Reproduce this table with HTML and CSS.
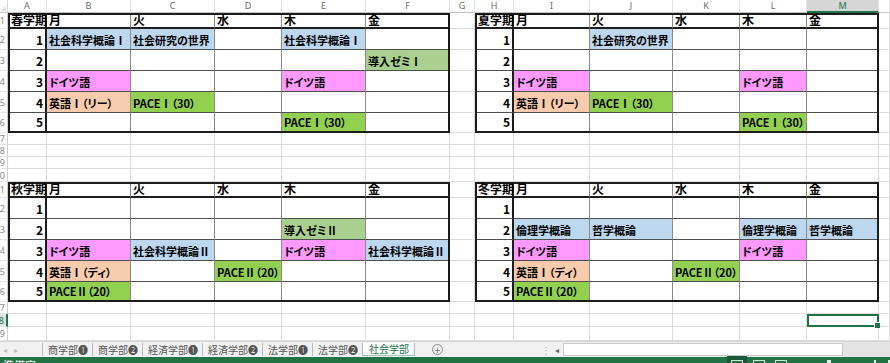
FILE: index.html
```html
<!DOCTYPE html>
<html lang="ja">
<head>
<meta charset="utf-8">
<title>時間割</title>
<link rel="stylesheet" href="styles.css">
</head>
<body>
<div class="app">
  <div class="sheet">
    <div class="corner"></div>
    <div class="ch">A</div><div class="ch">B</div><div class="ch">C</div><div class="ch">D</div><div class="ch">E</div><div class="ch">F</div><div class="ch">G</div><div class="ch">H</div><div class="ch">I</div><div class="ch">J</div><div class="ch">K</div><div class="ch">L</div><div class="ch on">M</div><div class="ch"></div>

    <div class="tbl tl t1">
      <div>春学期</div><div>月</div><div>火</div><div>水</div><div>木</div><div>金</div>
      <div>1</div><div class="b">社会科学概論Ⅰ</div><div class="b">社会研究の世界</div><div></div><div class="b">社会科学概論Ⅰ</div><div></div>
      <div>2</div><div></div><div></div><div></div><div></div><div class="lg">導入ゼミⅠ</div>
      <div>3</div><div class="p">ドイツ語</div><div></div><div></div><div class="p">ドイツ語</div><div></div>
      <div>4</div><div class="o">英語Ⅰ（リー）</div><div class="g">PACEⅠ（30）</div><div></div><div></div><div></div>
      <div>5</div><div></div><div></div><div></div><div class="g">PACEⅠ（30）</div><div></div>
    </div>

    <div class="tbl tr t2">
      <div>夏学期</div><div>月</div><div>火</div><div>水</div><div>木</div><div>金</div>
      <div>1</div><div></div><div class="b">社会研究の世界</div><div></div><div></div><div></div>
      <div>2</div><div></div><div></div><div></div><div></div><div></div>
      <div>3</div><div class="p">ドイツ語</div><div></div><div></div><div class="p">ドイツ語</div><div></div>
      <div>4</div><div class="o">英語Ⅰ（リー）</div><div class="g">PACEⅠ（30）</div><div></div><div></div><div></div>
      <div>5</div><div></div><div></div><div></div><div class="g">PACEⅠ（30）</div><div></div>
    </div>

    <div class="tbl tl t3">
      <div>秋学期</div><div>月</div><div>火</div><div>水</div><div>木</div><div>金</div>
      <div>1</div><div></div><div></div><div></div><div></div><div></div>
      <div>2</div><div></div><div></div><div></div><div class="lg">導入ゼミⅡ</div><div></div>
      <div>3</div><div class="p">ドイツ語</div><div class="b">社会科学概論Ⅱ</div><div></div><div class="p">ドイツ語</div><div class="b">社会科学概論Ⅱ</div>
      <div>4</div><div class="o">英語Ⅰ（ディ）</div><div></div><div class="g">PACEⅡ（20）</div><div></div><div></div>
      <div>5</div><div class="g">PACEⅡ（20）</div><div></div><div></div><div></div><div></div>
    </div>

    <div class="tbl tr t4">
      <div>冬学期</div><div>月</div><div>火</div><div>水</div><div>木</div><div>金</div>
      <div>1</div><div></div><div></div><div></div><div></div><div></div>
      <div>2</div><div class="b">倫理学概論</div><div class="b">哲学概論</div><div></div><div class="b">倫理学概論</div><div class="b">哲学概論</div>
      <div>3</div><div class="p">ドイツ語</div><div></div><div></div><div class="p">ドイツ語</div><div></div>
      <div>4</div><div class="o">英語Ⅰ（ディ）</div><div></div><div class="g">PACEⅡ（20）</div><div></div><div></div>
      <div>5</div><div class="g">PACEⅡ（20）</div><div></div><div></div><div></div><div></div>
    </div>

    <!-- rows 1-6: row header, column G, trailing column -->
    <div class="rh">1</div><div class="e"></div><div class="e"></div>
    <div class="rh">2</div><div class="e"></div><div class="e"></div>
    <div class="rh">3</div><div class="e"></div><div class="e"></div>
    <div class="rh">4</div><div class="e"></div><div class="e"></div>
    <div class="rh">5</div><div class="e"></div><div class="e"></div>
    <div class="rh">6</div><div class="e"></div><div class="e"></div>
    <!-- rows 7-10 -->
    <div class="rh">7</div><div class="e"></div><div class="e"></div><div class="e"></div><div class="e"></div><div class="e"></div><div class="e"></div><div class="e"></div><div class="e"></div><div class="e"></div><div class="e"></div><div class="e"></div><div class="e"></div><div class="e"></div><div class="e"></div>
    <div class="rh">8</div><div class="e"></div><div class="e"></div><div class="e"></div><div class="e"></div><div class="e"></div><div class="e"></div><div class="e"></div><div class="e"></div><div class="e"></div><div class="e"></div><div class="e"></div><div class="e"></div><div class="e"></div><div class="e"></div>
    <div class="rh">9</div><div class="e"></div><div class="e"></div><div class="e"></div><div class="e"></div><div class="e"></div><div class="e"></div><div class="e"></div><div class="e"></div><div class="e"></div><div class="e"></div><div class="e"></div><div class="e"></div><div class="e"></div><div class="e"></div>
    <div class="rh">10</div><div class="e"></div><div class="e"></div><div class="e"></div><div class="e"></div><div class="e"></div><div class="e"></div><div class="e"></div><div class="e"></div><div class="e"></div><div class="e"></div><div class="e"></div><div class="e"></div><div class="e"></div><div class="e"></div>
    <!-- rows 11-16 -->
    <div class="rh">11</div><div class="e"></div><div class="e"></div>
    <div class="rh">12</div><div class="e"></div><div class="e"></div>
    <div class="rh">13</div><div class="e"></div><div class="e"></div>
    <div class="rh">14</div><div class="e"></div><div class="e"></div>
    <div class="rh">15</div><div class="e"></div><div class="e"></div>
    <div class="rh">16</div><div class="e"></div><div class="e"></div>
    <!-- rows 17-19 -->
    <div class="rh">17</div><div class="e"></div><div class="e"></div><div class="e"></div><div class="e"></div><div class="e"></div><div class="e"></div><div class="e"></div><div class="e"></div><div class="e"></div><div class="e"></div><div class="e"></div><div class="e"></div><div class="e"></div><div class="e"></div>
    <div class="rh on">18</div><div class="e"></div><div class="e"></div><div class="e"></div><div class="e"></div><div class="e"></div><div class="e"></div><div class="e"></div><div class="e"></div><div class="e"></div><div class="e"></div><div class="e"></div><div class="e"></div><div class="e sel"></div><div class="e"></div>
    <div class="rh">19</div><div class="e"></div><div class="e"></div><div class="e"></div><div class="e"></div><div class="e"></div><div class="e"></div><div class="e"></div><div class="e"></div><div class="e"></div><div class="e"></div><div class="e"></div><div class="e"></div><div class="e"></div><div class="e"></div>
  </div>

  <div class="tabbar">
    <div class="nav"><span>◂</span><span>▸</span></div>
    <div class="tabs">
      <div class="tab">商学部❶</div>
      <div class="tab">商学部❷</div>
      <div class="tab">経済学部❶</div>
      <div class="tab">経済学部❷</div>
      <div class="tab">法学部❶</div>
      <div class="tab">法学部❷</div>
      <div class="tab act">社会学部</div>
    </div>
    <div class="add">+</div>
    <div class="spacer"></div>
    <div class="dots">⋮</div>
    <div class="left">◂</div>
    <div class="track"></div>
    <div class="tail"></div>
  </div>

  <div class="status">
    <span class="ready">準備完了</span>
    <div class="views">
      <span class="vb active"></span><span class="vb"></span><span class="vb"></span>
    </div>
    <div class="zoomctl">
      <span class="minus"></span><span class="thumb"></span><span class="plus"></span><span class="plus2"></span>
    </div>
  </div>
</div>
</body>
</html>
```

FILE: styles.css
```css
* {
  box-sizing: border-box;
  margin: 0;
  padding: 0;
}

html, body {
  width: 890px;
  height: 363px;
  overflow: hidden;
  background: #fff;
}

body {
  font-family: "Noto Sans CJK JP", "Noto Sans", sans-serif;
  color: #000;
}

.app {
  display: flex;
  flex-direction: column;
  width: 890px;
}

/* ---------- sheet grid ---------- */
.sheet {
  display: grid;
  grid-template-columns: 8px 39px 84px 84px 67px 84px 84px 25px 39px 76px 83px 67px 67px 72px 11px;
  grid-template-rows: 13px 16px 21px 21px 21px 21px 20px 12px 12px 12px 13px 16px 21px 21px 21px 21px 20px 12px 13px 14px;
}

.corner {
  position: relative;
  border-right: 1px solid #d4d4d4;
  border-bottom: 1px solid #c4c4c4;
  background: #fff;
}

.corner::after {
  content: "";
  position: absolute;
  right: 1px;
  bottom: 1px;
  border-left: 5px solid transparent;
  border-bottom: 5px solid #dcdcdc;
}

.ch {
  font-family: "Noto Sans", "DejaVu Sans", sans-serif;
  font-size: 9px;
  line-height: 12px;
  color: #6a6a6a;
  text-align: center;
  border-right: 1px solid #e2e2e2;
  border-bottom: 1px solid #c4c4c4;
  background: #fff;
}

.ch.on {
  background: #d6d6d6;
  color: #217346;
  border-bottom: 2px solid #217346;
}

.rh {
  display: flex;
  justify-content: flex-end;
  align-items: center;
  overflow: hidden;
  padding-right: 2px;
  font-family: "Noto Sans", "DejaVu Sans", sans-serif;
  font-size: 9px;
  color: #8a8a8a;
  white-space: nowrap;
  border-right: 1px solid #cfcfcf;
  border-bottom: 1px solid #e4e4e4;
}

.rh.on {
  color: #217346;
  background: #e4e4e4;
  border-right: 2px solid #217346;
}

.e {
  border-right: 1px solid #dcdcdc;
  border-bottom: 1px solid #dcdcdc;
}

.e.sel {
  position: relative;
  border: 2px solid #217346;
}

.e.sel::after {
  content: "";
  position: absolute;
  right: -4px;
  bottom: -4px;
  width: 5px;
  height: 5px;
  background: #217346;
  border: 1px solid #fff;
}

/* ---------- timetable blocks ---------- */
.tbl {
  display: grid;
  grid-template-rows: 14px 21px 21px 21px 21px 18px;
  border: 2px solid #1c1c1c;
  font-size: 11px;
  font-weight: 700;
  font-feature-settings: "palt";
  background: #fff;
}

.tl {
  grid-template-columns: 37px 84px 84px 67px 84px 82px;
}

.tr {
  grid-template-columns: 37px 76px 83px 67px 67px 70px;
}

.t1 { grid-column: 2 / 8; grid-row: 2 / 8; }
.t2 { grid-column: 9 / 15; grid-row: 2 / 8; }
.t3 { grid-column: 2 / 8; grid-row: 12 / 18; }
.t4 { grid-column: 9 / 15; grid-row: 12 / 18; }

.tbl > div {
  display: flex;
  align-items: flex-end;
  padding: 0 2px 2px 2px;
  line-height: 14px;
  white-space: nowrap;
  border-right: 1px solid #8c8c8c;
  border-bottom: 1px solid #4f4f4f;
}

.tbl > div:nth-child(6n+1) {
  justify-content: flex-end;
  font-size: 12px;
  border-right: 2px solid #1c1c1c;
}

.tbl > div:first-child {
  justify-content: flex-start;
  padding-left: 1px;
}

.tbl > div:nth-child(6n) {
  border-right: 0;
}

.tbl > div:nth-child(-n+6) {
  font-size: 12px;
  border-bottom: 2px solid #1c1c1c;
  padding-bottom: 0;
}

.tbl > div:nth-last-child(-n+6) {
  border-bottom: 0;
}

.b  { background: #bdd7ee; }
.p  { background: #ff99ff; }
.o  { background: #f8cbad; }
.g  { background: #92d050; }
.lg { background: #a9d08e; }

/* ---------- sheet tabs ---------- */
.tabbar {
  display: flex;
  align-items: stretch;
  height: 16px;
  background: #f1f1f1;
  border-top: 1px solid #d6d6d6;
  font-size: 10px;
  color: #555;
}

.nav {
  display: flex;
  align-items: center;
  gap: 7px;
  width: 42px;
  padding-left: 3px;
  font-size: 8px;
  color: #bdbdbd;
}

.tabs {
  display: flex;
  border-left: 1px solid #b8b8b8;
  margin: 1px 0 1px 0;
}

.tab {
  display: flex;
  align-items: center;
  padding: 0 4px 0 5px;
  border-right: 1px solid #b8b8b8;
  line-height: 12px;
  white-space: nowrap;
}

.tab.act {
  background: #fff;
  color: #217346;
  border-bottom: 1px solid #9fc5ae;
  padding: 0 5px 0 6px;
}

.add {
  display: flex;
  align-items: center;
  justify-content: center;
  width: 11px;
  height: 11px;
  margin: 2px 0 0 17px;
  border: 1px solid #8e8e8e;
  border-radius: 50%;
  font-size: 10px;
  line-height: 9px;
  color: #777;
}

.spacer {
  flex: 1;
}

.dots {
  display: flex;
  align-items: center;
  width: 14px;
  color: #aaa;
  font-size: 10px;
}

.left {
  display: flex;
  align-items: center;
  width: 8px;
  font-size: 8px;
  color: #666;
}

.track {
  width: 280px;
  margin: 1px 0;
  background: #fff;
  border: 1px solid #c9c9c9;
}

.tail {
  width: 47px;
  background: #e3e3e3;
}

/* ---------- status bar ---------- */
.status {
  position: relative;
  display: flex;
  align-items: flex-start;
  height: 22px;
  background: #217346;
  color: #fff;
}

.ready {
  padding: 1px 0 0 3px;
  font-size: 11px;
  line-height: 14px;
}

.views {
  display: flex;
  gap: 10px;
  margin-left: 695px;
}

.vb {
  display: block;
  width: 12px;
  height: 10px;
  margin-top: 3px;
  border: 1px solid #cfe3d6;
}

.vb.active {
  outline: 4px solid #19593a;
}

.zoomctl {
  display: flex;
  margin-left: 40px;
}

.zoomctl span {
  display: block;
  width: 2px;
  height: 8px;
  margin-top: 3px;
  background: #dfeee5;
}

.zoomctl .plus { margin-left: 43px; }
.zoomctl .plus2 { margin-left: 12px; }
```
